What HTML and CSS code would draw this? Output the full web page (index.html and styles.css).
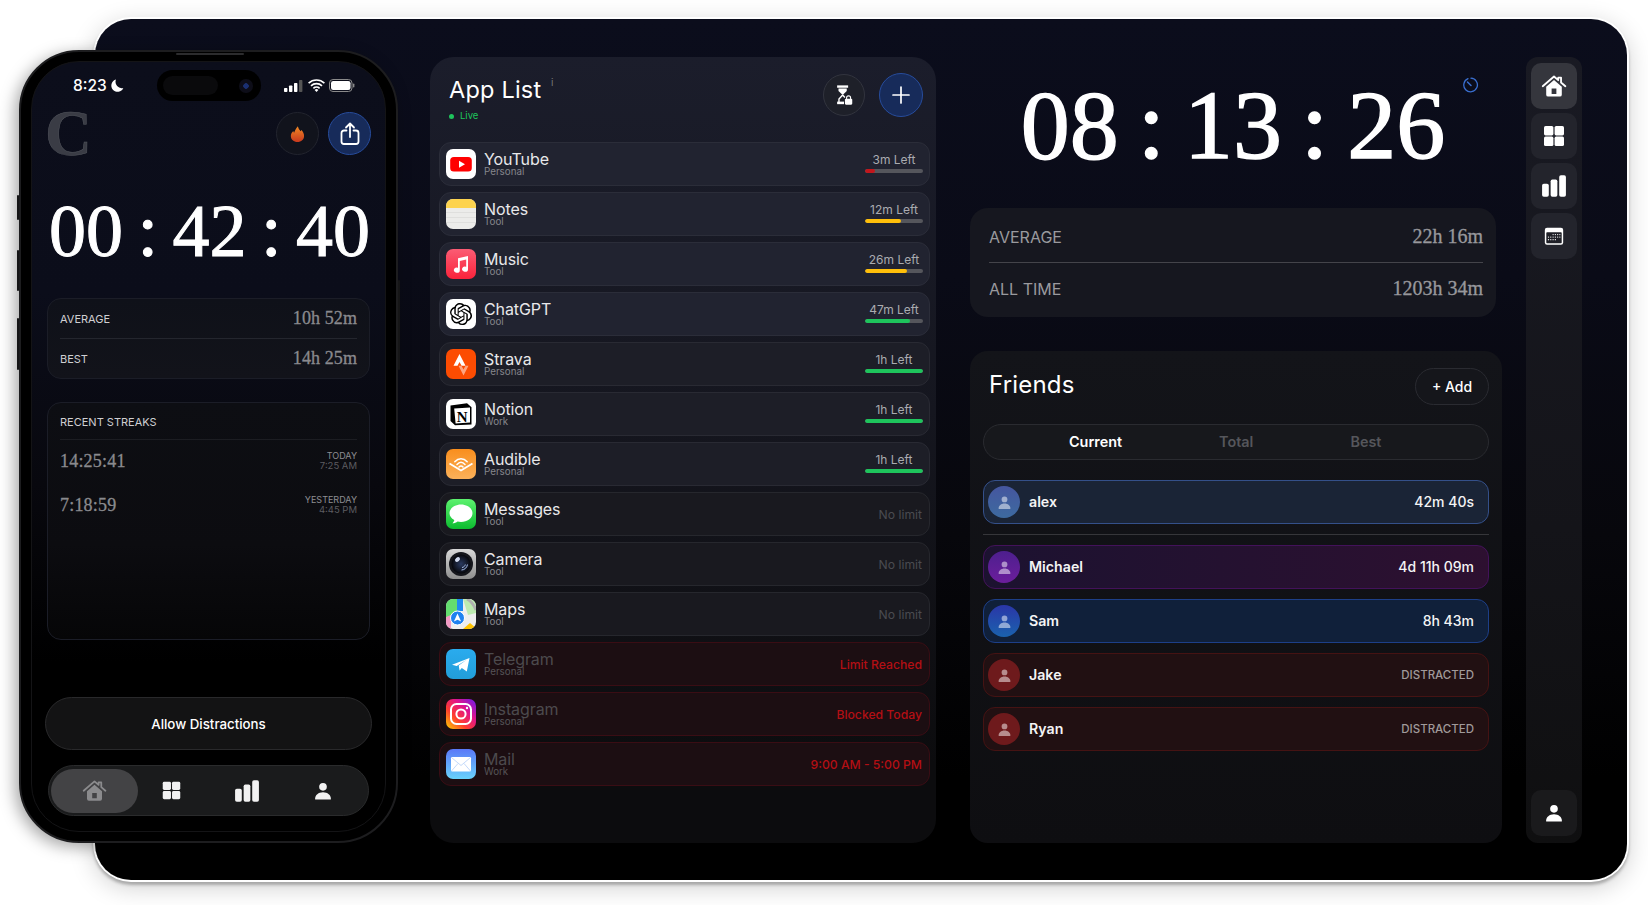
FILE: index.html
```html
<!DOCTYPE html>
<html lang="en">
<head>
<meta charset="utf-8">
<title>Focus dashboard</title>
<link rel="stylesheet" href="styles.css">
</head>
<body>
<svg class="defs" width="0" height="0" aria-hidden="true">
  <symbol id="i-home" viewBox="0 0 24 24"><path d="M1.6 12.2 12 3.2l3.9 3.4V4.2h2.6v4.6l4 3.4" fill="none" stroke="currentColor" stroke-width="1.7" stroke-linejoin="round" stroke-linecap="round"/><path fill-rule="evenodd" d="M12 6.4l7.2 6.2v7.4a1.8 1.8 0 0 1-1.8 1.8H6.6A1.8 1.8 0 0 1 4.8 20v-7.4zM9.8 14.4v5h4.4v-5z" fill="currentColor"/></symbol>
  <symbol id="i-grid" viewBox="0 0 24 24"><rect x="2" y="2" width="9.4" height="9.4" rx="1.6" fill="currentColor"/><rect x="12.6" y="2" width="9.4" height="9.4" rx="1.6" fill="currentColor"/><rect x="2" y="12.6" width="9.4" height="9.4" rx="1.6" fill="currentColor"/><rect x="12.6" y="12.6" width="9.4" height="9.4" rx="1.6" fill="currentColor"/></symbol>
  <symbol id="i-bars" viewBox="0 0 24 24"><rect x="1" y="10" width="6.2" height="12" rx="1.6" fill="currentColor"/><rect x="8.9" y="6" width="6.2" height="16" rx="1.6" fill="currentColor"/><rect x="16.8" y="2" width="6.2" height="20" rx="1.6" fill="currentColor"/></symbol>
  <symbol id="i-user" viewBox="0 0 24 24"><circle cx="12" cy="7" r="4.6" fill="currentColor"/><path d="M2.5 21.5c0-4.6 4-8 9.5-8s9.5 3.4 9.5 8c0 .4-.3.7-.7.7H3.2c-.4 0-.7-.3-.7-.7z" fill="currentColor"/></symbol>
  <symbol id="i-cal" viewBox="0 0 24 24"><rect x="2" y="3" width="20" height="18.5" rx="2.4" fill="currentColor"/><rect x="3.6" y="8" width="16.8" height="12" rx=".8" fill="#1f2027"/><g fill="currentColor"><circle cx="11" cy="10.4" r=".7"/><circle cx="13.5" cy="10.4" r=".7"/><circle cx="16" cy="10.4" r=".7"/><circle cx="18.4" cy="10.4" r=".7"/><circle cx="6" cy="13.2" r=".7"/><circle cx="8.5" cy="13.2" r=".7"/><circle cx="11" cy="13.2" r=".7"/><circle cx="13.5" cy="13.2" r=".7"/><circle cx="16" cy="13.2" r=".7"/><circle cx="18.4" cy="13.2" r=".7"/><circle cx="6" cy="16" r=".7"/><circle cx="8.5" cy="16" r=".7"/><circle cx="11" cy="16" r=".7"/><circle cx="13.5" cy="16" r=".7"/></g></symbol>
  <linearGradient id="g-flame" x1="0" y1="0" x2="0" y2="1"><stop offset="0" stop-color="#f08a24"/><stop offset="1" stop-color="#c8391e"/></linearGradient>
  <linearGradient id="g-ig" x1="0" y1="1" x2="1" y2="0"><stop offset="0" stop-color="#ffd000"/><stop offset=".35" stop-color="#ff3d2e"/><stop offset=".65" stop-color="#e0148c"/><stop offset="1" stop-color="#6a1cf0"/></linearGradient>
  <linearGradient id="g-mail" x1="0" y1="0" x2="0" y2="1"><stop offset="0" stop-color="#5a78f8"/><stop offset="1" stop-color="#69d2fb"/></linearGradient>
  <linearGradient id="g-msg" x1="0" y1="0" x2="0" y2="1"><stop offset="0" stop-color="#5df26f"/><stop offset="1" stop-color="#0cbc2f"/></linearGradient>
  <linearGradient id="g-music" x1="0" y1="0" x2="0" y2="1"><stop offset="0" stop-color="#fb5c74"/><stop offset="1" stop-color="#fa233b"/></linearGradient>
  <linearGradient id="g-aud" x1="0" y1="0" x2="0" y2="1"><stop offset="0" stop-color="#f98e1d"/><stop offset="1" stop-color="#fbb15a"/></linearGradient>
  <linearGradient id="g-tg" x1="0" y1="0" x2="0" y2="1"><stop offset="0" stop-color="#2aabee"/><stop offset="1" stop-color="#229ed9"/></linearGradient>
  <radialGradient id="g-lens" cx=".5" cy=".5" r=".5"><stop offset="0" stop-color="#2a3a60"/><stop offset=".75" stop-color="#111522"/><stop offset="1" stop-color="#05060b"/></radialGradient>
  <linearGradient id="g-cam" x1="0" y1="0" x2="0" y2="1"><stop offset="0" stop-color="#d8d8d8"/><stop offset="1" stop-color="#8e8e8e"/></linearGradient>
</svg>

<main class="stage">
  <section class="tablet">
    <div class="panel applist">
      <header class="applist-head">
        <div class="applist-title">
          <h1 class="title">App List <sup class="info">i</sup></h1>
          <p class="live"><span class="live-dot"></span>Live</p>
        </div>
        <div class="head-actions">
          <button class="round round-dark">
            <svg width="22" height="22" viewBox="0 0 24 24"><path d="M4.500 1.500h12v2.600h-12z" fill="#fff"/><path d="M6 5h9v2.500L10.500 12 6 7.500z" fill="#fff"/><path d="M10.500 12 6.500 16.500v3.200M10.500 12l2.500 2.800" fill="none" stroke="#fff" stroke-width="1.500"/><path d="M4.500 19.200h7.500v2.800H4.500z" fill="#fff"/><rect x="13" y="16" width="8" height="6.500" rx="1.200" fill="#fff"/><path d="M14.800 16.400v-1.200a2.200 2.200 0 0 1 4.400 0v1.200" fill="none" stroke="#fff" stroke-width="1.200"/></svg>
          </button>
          <button class="round round-blue round-lg">
            <svg width="20" height="20" viewBox="0 0 20 20"><path d="M10 2v16M2 10h16" stroke="#fff" stroke-width="1.700" stroke-linecap="round"/></svg>
          </button>
        </div>
      </header>
      <div class="rows">
        <div class="row">
          <svg class="app" viewBox="0 0 30 30"><rect width="30" height="30" fill="#fff"/><rect x="4.200" y="8" width="21.600" height="14.600" rx="3.600" fill="#f00"/><path d="M13 11.800v7l6-3.500z" fill="#fff"/></svg>
          <div class="names"><span class="name">YouTube</span><span class="sub">Personal</span></div>
          <div class="limit"><span class="limit-label">3m Left</span><span class="bar"><span class="fill fill-red" style="width:17%"></span></span></div>
        </div>
        <div class="row">
          <svg class="app" viewBox="0 0 30 30"><rect width="30" height="30" fill="#ececea"/><rect width="30" height="9" fill="#fdd34e"/><path d="M0 13.500h30M0 18.500h30M0 23.500h30" stroke="#d6d6d4" stroke-width=".6"/></svg>
          <div class="names"><span class="name">Notes</span><span class="sub">Tool</span></div>
          <div class="limit"><span class="limit-label">12m Left</span><span class="bar"><span class="fill fill-yellow" style="width:62%"></span></span></div>
        </div>
        <div class="row">
          <svg class="app" viewBox="0 0 30 30"><rect width="30" height="30" fill="url(#g-music)"/><path d="M12 9.200 22 7v13.200a3 2.600 0 1 1-1.800-2.400v-7.300l-6.400 1.400v9.300a3 2.600 0 1 1-1.800-2.400z" fill="#fff"/></svg>
          <div class="names"><span class="name">Music</span><span class="sub">Tool</span></div>
          <div class="limit"><span class="limit-label">26m Left</span><span class="bar"><span class="fill fill-yellow" style="width:72%"></span></span></div>
        </div>
        <div class="row">
          <svg class="app" viewBox="0 0 30 30"><rect width="30" height="30" fill="#fff"/><g transform="translate(4 4) scale(.92)"><path d="M22.2819 9.8211a5.9847 5.9847 0 0 0-.5157-4.9108 6.0462 6.0462 0 0 0-6.5098-2.9A6.0651 6.0651 0 0 0 4.9807 4.1818a5.9847 5.9847 0 0 0-3.9977 2.9 6.0462 6.0462 0 0 0 .7427 7.0966 5.98 5.98 0 0 0 .511 4.9107 6.051 6.051 0 0 0 6.5146 2.9001A5.9847 5.9847 0 0 0 13.2599 24a6.0557 6.0557 0 0 0 5.7718-4.2058 5.9894 5.9894 0 0 0 3.9977-2.9001 6.0557 6.0557 0 0 0-.7475-7.0729zm-9.022 12.6081a4.4755 4.4755 0 0 1-2.8764-1.0408l.1419-.0804 4.7783-2.7582a.7948.7948 0 0 0 .3927-.6813v-6.7369l2.02 1.1686a.071.071 0 0 1 .038.052v5.5826a4.504 4.504 0 0 1-4.4945 4.4944zm-9.6607-4.1254a4.4708 4.4708 0 0 1-.5346-3.0137l.142.0852 4.783 2.7582a.7712.7712 0 0 0 .7806 0l5.8428-3.3685v2.3324a.0804.0804 0 0 1-.0332.0615L9.74 19.9502a4.4992 4.4992 0 0 1-6.1408-1.6464zM2.3408 7.8956a4.485 4.485 0 0 1 2.3655-1.9728V11.6a.7664.7664 0 0 0 .3879.6765l5.8144 3.3543-2.0201 1.1685a.0757.0757 0 0 1-.071 0l-4.8303-2.7865A4.504 4.504 0 0 1 2.3408 7.872zm16.5963 3.8558L13.1038 8.364 15.1192 7.2a.0757.0757 0 0 1 .071 0l4.8303 2.7913a4.4944 4.4944 0 0 1-.6765 8.1042v-5.6772a.79.79 0 0 0-.407-.667zm2.0107-3.0231l-.142-.0852-4.7735-2.7818a.7759.7759 0 0 0-.7854 0L9.409 9.2297V6.8974a.0662.0662 0 0 1 .0284-.0615l4.8303-2.7866a4.4992 4.4992 0 0 1 6.6802 4.66zM8.3065 12.863l-2.02-1.1638a.0804.0804 0 0 1-.038-.0567V6.0742a4.4992 4.4992 0 0 1 7.3757-3.4537l-.142.0805L8.704 5.459a.7948.7948 0 0 0-.3927.6813zm1.0976-2.3654l2.602-1.4998 2.6069 1.4998v2.9994l-2.5974 1.4997-2.6067-1.4997Z" fill="#000"/></g></svg>
          <div class="names"><span class="name">ChatGPT</span><span class="sub">Tool</span></div>
          <div class="limit"><span class="limit-label">47m Left</span><span class="bar"><span class="fill fill-green" style="width:77%"></span></span></div>
        </div>
        <div class="row row-mid">
          <svg class="app" viewBox="0 0 30 30"><rect width="30" height="30" fill="#fc4c02"/><path d="M13.500 5 7.500 16.800h4L13.500 13l2 3.800h4z" fill="#fff"/><path d="M19.500 16.800l-2 3.800-2-3.800h-3l5 9.800 5-9.800z" fill="#fda580"/></svg>
          <div class="names"><span class="name">Strava</span><span class="sub">Personal</span></div>
          <div class="limit"><span class="limit-label">1h Left</span><span class="bar"><span class="fill fill-green" style="width:100%"></span></span></div>
        </div>
        <div class="row row-mid">
          <svg class="app" viewBox="0 0 30 30"><rect width="30" height="30" fill="#fff"/><path d="M4.500 6.500 21 4.200l4.500 4v17.300L9 26.200 4.500 22z" fill="#000"/><path d="M8.200 9.600 24 8.600v15L9.600 24.500z" fill="#fff"/><text x="16.200" y="22.500" class="notion-n">N</text></svg>
          <div class="names"><span class="name">Notion</span><span class="sub">Work</span></div>
          <div class="limit"><span class="limit-label">1h Left</span><span class="bar"><span class="fill fill-green" style="width:100%"></span></span></div>
        </div>
        <div class="row row-mid">
          <svg class="app" viewBox="0 0 30 30"><rect width="30" height="30" fill="url(#g-aud)"/><path d="M3.500 14.500 15 21.500l11.500-7" fill="none" stroke="#fff" stroke-width="1.800" stroke-linejoin="round"/><path d="M8.800 12.800c3.600-4 8.800-4 12.400 0M11 15.500c2.600-3 5.400-3 8 0M13 18c1.300-1.500 2.700-1.500 4 0" fill="none" stroke="#fff" stroke-width="1.500" stroke-linecap="round"/></svg>
          <div class="names"><span class="name">Audible</span><span class="sub">Personal</span></div>
          <div class="limit"><span class="limit-label">1h Left</span><span class="bar"><span class="fill fill-green" style="width:100%"></span></span></div>
        </div>
        <div class="row row-low">
          <svg class="app" viewBox="0 0 30 30"><rect width="30" height="30" fill="url(#g-msg)"/><path d="M15 5.500c6.300 0 11.500 3.800 11.500 8.700s-5.200 8.700-11.500 8.700c-1.200 0-2.400-.1-3.400-.4-1.400 1.200-3.500 1.900-5.300 1.800 1-.8 1.800-2 2-3.300-2.900-1.600-4.800-4-4.800-6.800 0-4.900 5.200-8.700 11.500-8.700z" fill="#fff"/></svg>
          <div class="names"><span class="name">Messages</span><span class="sub">Tool</span></div>
          <span class="status status-none">No limit</span>
        </div>
        <div class="row row-low">
          <svg class="app" viewBox="0 0 30 30"><rect width="30" height="30" fill="url(#g-cam)"/><circle cx="15" cy="15" r="12" fill="#15161c"/><circle cx="15" cy="15" r="9.500" fill="url(#g-lens)"/><ellipse cx="11.500" cy="10.500" rx="2.800" ry="2" fill="#cfd8ee" transform="rotate(-40 11.500 10.500)"/><path d="M15.500 21c3 0 5.500-2.500 6-5.500M16 18.500c1.800-.2 3-1.400 3.300-3" fill="none" stroke="#a8c0f0" stroke-width="1"/></svg>
          <div class="names"><span class="name">Camera</span><span class="sub">Tool</span></div>
          <span class="status status-none">No limit</span>
        </div>
        <div class="row row-low">
          <svg class="app" viewBox="0 0 30 30"><rect width="30" height="30" fill="#eee"/><path d="M0 0h11v12L0 20z" fill="#64dd6f"/><path d="M17 0h13v14l-8 2z" fill="#bdebb0"/><path d="M0 18l5-2v14H0z" fill="#f39ac5"/><path d="M17 30l7-6 6 5v1z" fill="#ffc400"/><path d="M11 0h6v12h-6z" fill="#1f8cf0"/><path d="M21 0c4 2 7 6 9 11" fill="none" stroke="#b0b0b0" stroke-width="3"/><circle cx="11.500" cy="19" r="7" fill="#1f82f0" stroke="#fff" stroke-width="1"/><path d="M11.500 14.500l3.600 8-3.600-1.800-3.600 1.800z" fill="#fff"/></svg>
          <div class="names"><span class="name">Maps</span><span class="sub">Tool</span></div>
          <span class="status status-none">No limit</span>
        </div>
        <div class="row row-blocked">
          <svg class="app" viewBox="0 0 30 30"><rect width="30" height="30" fill="url(#g-tg)"/><path d="M6 15.800 23.500 9 20.800 22.500l-5-3.500-2.200 2.400-.9-4.800L21 10.500l-10.300 6.600z" fill="#fff"/></svg>
          <div class="names"><span class="name">Telegram</span><span class="sub">Personal</span></div>
          <span class="status status-red">Limit Reached</span>
        </div>
        <div class="row row-blocked">
          <svg class="app" viewBox="0 0 30 30"><rect width="30" height="30" fill="url(#g-ig)"/><rect x="5" y="5" width="20" height="20" rx="5.500" fill="none" stroke="#fff" stroke-width="2"/><circle cx="15" cy="15" r="4.600" fill="none" stroke="#fff" stroke-width="2"/><circle cx="21" cy="9" r="1.200" fill="#fff"/></svg>
          <div class="names"><span class="name">Instagram</span><span class="sub">Personal</span></div>
          <span class="status status-red">Blocked Today</span>
        </div>
        <div class="row row-blocked">
          <svg class="app" viewBox="0 0 30 30"><rect width="30" height="30" fill="url(#g-mail)"/><rect x="5" y="8" width="20" height="14.500" rx="1.200" fill="#fff"/><path d="M5.500 8.500 15 16.500l9.500-8M5.500 22 12 14.500M24.500 22 18 14.500" fill="none" stroke="#a9c8f8" stroke-width=".7"/></svg>
          <div class="names"><span class="name">Mail</span><span class="sub">Work</span></div>
          <span class="status status-red">9:00 AM - 5:00 PM</span>
        </div>
      </div>
    </div>

    <div class="middle">
      <div class="clock-wrap">
        <div class="clock">08 : 13 : 26</div>
        <svg class="clock-icon" width="16" height="16" viewBox="0 0 16 16"><path d="M5 1.700A6.800 6.800 0 1 0 8 1.200" fill="none" stroke="#3a6fd0" stroke-width="1.300" stroke-linecap="round"/><path d="M4.500 5 8 8.500" stroke="#3a6fd0" stroke-width="1.500" stroke-linecap="round"/></svg>
      </div>
      <div class="summary">
        <div class="summary-row summary-row-first"><span class="summary-label">AVERAGE</span><span class="summary-value">22h 16m</span></div>
        <div class="summary-row summary-row-last"><span class="summary-label">ALL TIME</span><span class="summary-value">1203h 34m</span></div>
      </div>
      <div class="friends">
        <header class="friends-head">
          <h2 class="title friends-title">Friends</h2>
          <button class="add">+ Add</button>
        </header>
        <div class="tabs"><span class="tab tab-on">Current</span><span class="tab">Total</span><span class="tab">Best</span></div>
        <div class="friend friend-me">
          <span class="avatar avatar-me"><svg width="15" height="15"><use href="#i-user"/></svg></span>
          <span class="friend-name">alex</span><span class="friend-time">42m 40s</span>
        </div>
        <div class="friends-rule"></div>
        <div class="friend-list">
          <div class="friend friend-purple">
            <span class="avatar avatar-purple"><svg width="15" height="15"><use href="#i-user"/></svg></span>
            <span class="friend-name">Michael</span><span class="friend-time">4d 11h 09m</span>
          </div>
          <div class="friend friend-blue">
            <span class="avatar avatar-blue"><svg width="15" height="15"><use href="#i-user"/></svg></span>
            <span class="friend-name">Sam</span><span class="friend-time">8h 43m</span>
          </div>
          <div class="friend friend-red">
            <span class="avatar avatar-red"><svg width="15" height="15"><use href="#i-user"/></svg></span>
            <span class="friend-name">Jake</span><span class="friend-state">DISTRACTED</span>
          </div>
          <div class="friend friend-red">
            <span class="avatar avatar-red"><svg width="15" height="15"><use href="#i-user"/></svg></span>
            <span class="friend-name">Ryan</span><span class="friend-state">DISTRACTED</span>
          </div>
        </div>
      </div>
    </div>

    <nav class="rail">
      <a class="rail-btn rail-on"><svg width="26" height="26"><use href="#i-home"/></svg></a>
      <a class="rail-btn"><svg width="24" height="24"><use href="#i-grid"/></svg></a>
      <a class="rail-btn"><svg width="26" height="26"><use href="#i-bars"/></svg></a>
      <a class="rail-btn"><svg width="22" height="22"><use href="#i-cal"/></svg></a>
      <a class="rail-btn rail-end"><svg width="20" height="20"><use href="#i-user"/></svg></a>
    </nav>
  </section>

  <section class="phone">
    <span class="side side-a"></span><span class="side side-b"></span><span class="side side-c"></span><span class="side side-d"></span>
    <span class="speaker"></span>
    <div class="screen">
      <div class="statusbar">
        <div class="sb-left"><span class="sb-time">8:23</span>
          <svg width="13" height="13" viewBox="0 0 13 13"><path d="M5 .6a6.200 6.200 0 0 0 7.300 8.300A6.200 6.200 0 1 1 5 .6z" fill="#fff"/></svg>
        </div>
        <div class="island"><span class="island-pill"></span><span class="island-cam"></span></div>
        <div class="sb-right">
          <svg width="20" height="12" viewBox="0 0 20 12"><rect x="0" y="8" width="3.400" height="4" rx=".8" fill="#fff"/><rect x="5" y="5.500" width="3.400" height="6.500" rx=".8" fill="#fff"/><rect x="10" y="3" width="3.400" height="9" rx=".8" fill="#fff"/><rect x="15" y="0" width="3.400" height="12" rx=".8" fill="#555"/></svg>
          <svg width="17" height="13" viewBox="0 0 17 13"><path d="M.6 4.200a11.400 11.400 0 0 1 15.800 0M3 6.800a8 8 0 0 1 11 0M5.400 9.300a4.500 4.500 0 0 1 6.200 0" fill="none" stroke="#fff" stroke-width="1.600"/><path d="M8.500 13 6.600 10.900a2.800 2.800 0 0 1 3.800 0z" fill="#fff"/></svg>
          <svg width="26" height="13" viewBox="0 0 26 13"><rect x=".5" y=".5" width="22.500" height="12" rx="3.500" fill="none" stroke="#8a8a8a"/><rect x="2" y="2" width="19.500" height="9" rx="2.200" fill="#fff"/><rect x="24" y="4.500" width="1.400" height="4" rx=".7" fill="#8a8a8a"/></svg>
        </div>
      </div>
      <div class="phone-top">
        <span class="logo">C</span>
        <div class="phone-actions">
          <button class="round round-ghost"><svg width="15" height="18" viewBox="0 0 18 20"><path d="M9.500 .6c.6 3 2 4.500 3.300 6.200.5-.6.700-1.200.8-2 2 2.200 3.300 4.700 3.300 7.500 0 4.300-3.500 7.200-7.900 7.200S1 16.600 1 12.300c0-2.800 1.500-4.500 3-6 .1 1 .4 1.700 1 2.300C5.600 5.800 7.400 3 9.500.6z" fill="url(#g-flame)"/></svg></button>
          <button class="round round-blue round-share"><svg width="20" height="24" viewBox="0 0 20 24"><path d="M6.500 8.500H4a2.500 2.500 0 0 0-2.500 2.500v8.500A2.500 2.500 0 0 0 4 22h12a2.500 2.500 0 0 0 2.500-2.500V11A2.500 2.500 0 0 0 16 8.500h-2.500" fill="none" stroke="#fff" stroke-width="1.800" stroke-linecap="round"/><path d="M10 15V2M6 5.500 10 1.500l4 4" fill="none" stroke="#fff" stroke-width="1.800" stroke-linecap="round" stroke-linejoin="round"/></svg></button>
        </div>
      </div>
      <div class="phone-clock">00 : 42 : 40</div>
      <div class="card stats">
        <div class="stats-row"><span class="stats-label">AVERAGE</span><span class="stats-value">10h 52m</span></div>
        <div class="stats-row stats-row-last"><span class="stats-label">BEST</span><span class="stats-value">14h 25m</span></div>
      </div>
      <div class="card streaks">
        <div class="streaks-title">RECENT STREAKS</div>
        <div class="streak">
          <span class="streak-time">14:25:41</span>
          <span class="streak-when"><b>TODAY</b><i>7:25 AM</i></span>
        </div>
        <div class="streak">
          <span class="streak-time">7:18:59</span>
          <span class="streak-when"><b>YESTERDAY</b><i>4:45 PM</i></span>
        </div>
      </div>
      <button class="allow">Allow Distractions</button>
      <nav class="tabbar">
        <a class="tabbar-item tabbar-on"><svg width="25" height="25"><use href="#i-home"/></svg></a>
        <a class="tabbar-item"><svg width="21" height="21"><use href="#i-grid"/></svg></a>
        <a class="tabbar-item"><svg width="26" height="26"><use href="#i-bars"/></svg></a>
        <a class="tabbar-item"><svg width="20" height="20"><use href="#i-user"/></svg></a>
      </nav>
    </div>
  </section>
</main>
</body>
</html>
```

FILE: styles.css
```css
* { box-sizing: border-box; }
html, body { margin: 0; padding: 0; background: #fff; }
body { font-family: "Inter", "Liberation Sans", sans-serif; color: #fff; width: 1648px; height: 905px; overflow: hidden; }
.defs { position: absolute; }
h1, h2, p { margin: 0; font-weight: 400; }
button { font: inherit; color: inherit; padding: 0; cursor: pointer; }

.stage { position: relative; width: 1648px; height: 905px; }

/* tablet window */
.tablet {
  position: absolute; left: 95px; top: 19px; width: 1532px; height: 861px;
  display: flex; gap: 34px;
  padding: 38px 45px 37px 335px;
  border-radius: 36px;
  background: linear-gradient(180deg, #0b0d1c 0%, #0a0b17 30%, #07070c 60%, #000 88%);
  box-shadow: 0 0 0 2px #fff, 0 3px 3px 2px rgba(0,0,0,.25), 0 6px 24px 2px rgba(0,0,0,.18);
}

/* app list */
.panel { width: 506px; border-radius: 24px; background: linear-gradient(180deg, #1b1d2b 0%, #15161f 45%, #0c0c0e 90%); padding: 15px 6px 0 9px; }
.applist-head { display: flex; justify-content: space-between; height: 70px; padding: 0 7px 0 10px; }
.title { font-size: 23.5px; line-height: 30px; letter-spacing: .2px; color: #fff; }
.applist-title { padding-top: 3px; }
.info { font-size: 10px; color: #777; vertical-align: 12px; line-height: 0; margin-left: 3px; }
.live { display: flex; align-items: center; gap: 6px; font-size: 9.500px; line-height: 12px; color: #1ec45c; margin-top: 5px; }
.live-dot { width: 5px; height: 5px; border-radius: 50%; background: #1ec45c; }
.head-actions { display: flex; gap: 14px; align-items: flex-start; padding-top: 1px; }
.round { display: flex; align-items: center; justify-content: center; width: 42px; height: 42px; border-radius: 50%; border: 1px solid #32343e; background: #1e2029; }
.round-dark { margin-top: 1px; }
.round-blue { background: #172b5a; border-color: #274c9c; }
.round-lg { width: 44px; height: 44px; }

.rows { display: flex; flex-direction: column; gap: 6px; }
.row {
  display: flex; align-items: center; height: 44px; padding: 0 6px; gap: 8px;
  border-radius: 12px; border: 1px solid #2b2d39; background: #212330;
}
.row-mid { background: #1d1e27; border-color: #292a33; }
.row-low { background: #19191f; border-color: #26272d; }
.row-blocked { background: #1c0e12; border-color: #3a0d14; }
.app { width: 30px; height: 30px; border-radius: 7px; flex: none; }
.notion-n { font-family: "Liberation Serif", serif; font-weight: 700; font-size: 15px; text-anchor: middle; fill: #000; }
.names { flex: 1; display: flex; flex-direction: column; min-width: 0; }
.name { font-size: 16px; line-height: 15px; letter-spacing: -.1px; color: #e8e8ea; }
.sub { font-size: 9.800px; line-height: 10px; color: #85868c; }
.row-blocked .name { color: #4c4a4d; }
.row-blocked .sub { color: #565457; }
.limit { width: 58px; margin-top: -2px; display: flex; flex-direction: column; align-items: center; gap: 2px; }
.limit-label { font-size: 12px; line-height: 14px; color: #aaabb0; }
.bar { display: block; width: 58px; height: 4px; border-radius: 2px; background: #55565c; overflow: hidden; }
.fill { display: block; height: 100%; border-radius: 2px; }
.fill-red { background: #c3161c; }
.fill-yellow { background: #ffbf0a; }
.fill-green { background: #1ec45c; }
.status { font-size: 12.200px; margin-right: 1px; }
.status-none { color: #4a4b50; }
.status-red { color: #b30f14; font-weight: 500; }

/* middle column */
.middle { width: 532px; display: flex; flex-direction: column; }
.clock-wrap { position: relative; height: 151px; }
.clock { width: 526px; text-align: center; font-family: "Liberation Serif", serif; font-size: 98px; line-height: 136px; word-spacing: -5.500px; -webkit-text-stroke: 1.400px #fff; white-space: nowrap; }
.clock-icon { position: absolute; left: 493px; top: 20px; }
.summary { width: 526px; height: 109px; border-radius: 18px; background: #16171f; padding: 0 13px 0 19px; display: flex; flex-direction: column; }
.summary-row { flex: 1; display: flex; align-items: center; justify-content: space-between; }
.summary-row-first { border-bottom: 1px solid #44444a; padding-top: 3px; }
.summary-row-last { padding-bottom: 3px; }
.summary-label { font-size: 16px; color: #9a9a9e; }
.summary-value { font-family: "Liberation Serif", serif; font-size: 20px; color: #98989c; -webkit-text-stroke: .3px #98989c; }

.friends { margin-top: 34px; flex: 1; border-radius: 18px; background: linear-gradient(180deg, #131419 0%, #0e0e11 100%); padding: 0 13px; }
.friends-head { display: flex; justify-content: space-between; align-items: center; height: 73px; padding: 0 0 2px 6px; }
.friends-title { font-size: 24px; margin-bottom: 4px; }
.add { width: 74px; height: 37px; border-radius: 19px; background: #15161b; border: 1px solid #2a2b31; font-size: 14px; font-weight: 500; }
.tabs { display: flex; align-items: center; gap: 97px; height: 36px; border-radius: 18px; border: 1px solid #2a2b30; background: #17181c; padding: 0 0 2px 85px; }
.tab { font-size: 14.400px; font-weight: 600; color: #55565b; }
.tab-on { color: #fff; }
.friend { display: flex; align-items: center; height: 44px; border-radius: 12px; border: 1px solid; padding: 0 14px 0 4px; gap: 9px; }
.tabs + .friend { margin-top: 20px; }
.friend-me { background: #1a2436; border-color: #34508a; }
.friend-purple { background: linear-gradient(90deg, #1c1230, #2d1030); border-color: #43125a; }
.friend-blue { background: #10203a; border-color: #1d3f88; }
.friend-red { background: #211012; border-color: #451313; }
.avatar { width: 32px; height: 32px; border-radius: 50%; display: flex; align-items: center; justify-content: center; flex: none; color: rgba(255,255,255,.5); }
.avatar-me { background: linear-gradient(180deg, #45569f, #3d6a9f); }
.avatar-purple { background: linear-gradient(180deg, #4d1f8e, #6c1e9c); }
.avatar-blue { background: linear-gradient(180deg, #2a36a8, #1a62ae); }
.avatar-red { background: #6e1a1c; }
.friend-name { flex: 1; font-size: 14.200px; font-weight: 600; color: #f4f4f5; padding-bottom: 1px; }
.friend-time { font-size: 14px; font-weight: 500; color: #f4f4f5; padding-bottom: 1px; }
.friend-state { font-size: 11.500px; font-weight: 500; color: #a09a9a; padding-bottom: 1px; }
.friends-rule { height: 1px; background: #36363a; margin: 10px 0; }
.friend-list { display: flex; flex-direction: column; gap: 10px; }

/* rail */
.rail { width: 56px; margin-left: -10px; border-radius: 12px; background: linear-gradient(180deg, #191a23 0%, #141419 60%, #0f0f10 100%); padding: 6px 5px 7px; display: flex; flex-direction: column; gap: 4px; }
.rail-btn { width: 46px; height: 46px; border-radius: 10px; background: #23242c; display: flex; align-items: center; justify-content: center; color: #fff; }
.rail-on { background: #35363d; }
.rail-end { margin-top: auto; background: #1a1a1c; }

/* phone */
.phone {
  position: absolute; left: 19px; top: 50px; width: 379px; height: 793px;
  padding: 9px 10px; border-radius: 60px; background: #000;
  border: 2px solid #1d1d1f;
  box-shadow: -4px 4px 16px rgba(0,0,0,.35);
}
.side { position: absolute; width: 2px; background: #161617; border-radius: 1px; }
.side-a { left: -4px; top: 143px; height: 25px; }
.side-b { left: -4px; top: 198px; height: 41px; }
.side-c { left: -4px; top: 266px; height: 52px; }
.side-d { right: -4px; top: 228px; height: 90px; }
.speaker { position: absolute; left: 155px; top: 1px; width: 68px; height: 1.500px; background: #2c2c2e; border-radius: 1px; }
.screen {
  height: 100%; border-radius: 48px; border: 1px solid #141416; overflow: hidden;
  background: linear-gradient(180deg, #0c0e1b 0%, #0b0d1a 30%, #08080e 55%, #000 78%);
  display: flex; flex-direction: column; padding: 8px 14px 15px;
}
.statusbar { display: grid; grid-template-columns: 1fr 104px 1fr; height: 31px; margin: 0 -14px; flex: none; }
.sb-left { display: flex; align-items: center; gap: 4px; padding-left: 41px; }
.sb-time { font-size: 15.500px; font-weight: 500; }
.island { background: #000; border-radius: 16px; display: flex; align-items: center; justify-content: space-between; padding: 0 6px 0 6px; }
.island-pill { width: 55px; height: 19px; border-radius: 10px; background: #0a0a0c; }
.island-cam { width: 14px; height: 14px; border-radius: 50%; background: radial-gradient(circle, #1a2f70 0 2.500px, #0d0d18 3px); margin-right: 2px; }
.sb-right { display: flex; align-items: center; gap: 4px; padding-left: 23px; }
.phone-top { display: flex; justify-content: space-between; align-items: center; height: 43px; margin-top: 11px; flex: none; }
.logo { font-family: "Liberation Serif", serif; font-weight: 700; font-size: 65px; line-height: 43px; color: #3a3c45; -webkit-text-stroke: .5px #55585f; margin-left: -1px; }
.phone-actions { display: flex; gap: 9px; }
.phone-actions .round { width: 43px; height: 43px; }
.round-ghost { background: #11131c; border-color: #22242e; }
.phone-clock { font-family: "Liberation Serif", serif; font-size: 74px; line-height: 80px; height: 80px; margin-top: 36px; padding-left: 2px; text-align: center; word-spacing: -4px; -webkit-text-stroke: 1px #fff; white-space: nowrap; flex: none; }
.card { border-radius: 14px; border: 1px solid #1b1d27; margin: 0 1px; flex: none; }
.stats { margin-top: 27px; height: 81px; padding: 0 12px; background: linear-gradient(180deg, #0f1119, #12131a); display: flex; flex-direction: column; }
.stats-row { flex: 1; display: flex; align-items: center; justify-content: space-between; border-bottom: 1px solid #24262e; }
.stats-row-last { border-bottom: 0; }
.stats-label { font-size: 11px; color: #cfcfd2; }
.stats-value { font-family: "Liberation Serif", serif; font-size: 18px; letter-spacing: .1px; color: #8a8a8e; -webkit-text-stroke: .3px #8a8a8e; }
.streaks { margin-top: 23px; height: 238px; padding: 0 12px; background: linear-gradient(180deg, #0d0e13, #0c0c10 60%, #060607); }
.streaks-title { height: 37px; line-height: 39px; font-size: 11px; color: #cfcfd2; border-bottom: 1px solid #1c1d22; }
.streak { display: flex; justify-content: space-between; align-items: center; height: 44px; }
.streaks-title + .streak { margin-top: -1px; }
.streak-time { font-family: "Liberation Serif", serif; font-size: 18px; letter-spacing: .2px; color: #8a8a8e; -webkit-text-stroke: .3px #8a8a8e; }
.streak-when { display: flex; flex-direction: column; align-items: flex-end; font-size: 9px; line-height: 10.500px; }
.streak-when b { font-weight: 400; color: #8e8e92; }
.streak-when i { font-style: normal; color: #5c5c60; font-size: 9.500px; }
.allow { margin: auto -1px 0; flex: none; height: 53px; border-radius: 27px; background: #131314; border: 1px solid #29292b; font-size: 13.300px; font-weight: 500; }
.tabbar { margin: 15px 2px 0; height: 51px; flex: none; border-radius: 26px; background: #1a1b1c; border: 1px solid #2a2b2c; display: flex; align-items: center; padding: 0 2px; }
.tabbar-item { width: 76px; display: flex; justify-content: center; color: #f2f2f2; }
.tabbar-on { width: 87px; height: 44px; border-radius: 22px; background: #434345; color: #8b8b8d; align-items: center; margin-right: -5px; }
```
